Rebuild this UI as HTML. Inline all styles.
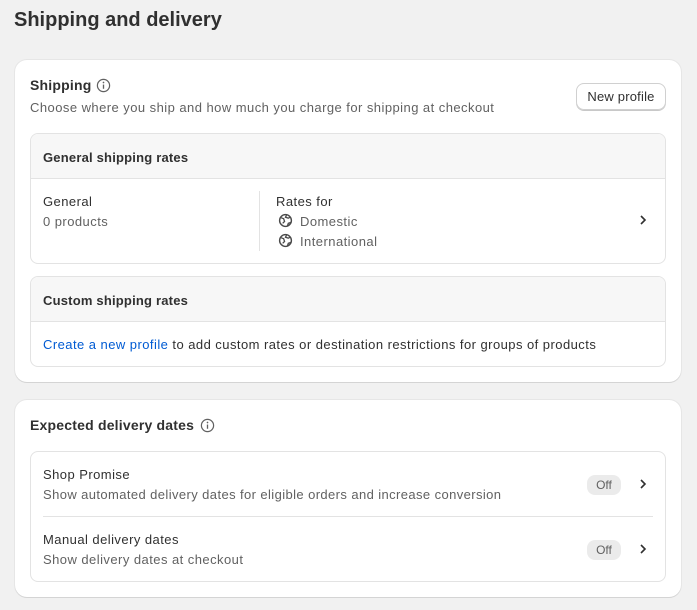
<!DOCTYPE html>
<html><head><meta charset="utf-8"><style>
*{box-sizing:border-box;margin:0;padding:0}
body{width:697px;height:610px;background:#f1f1f1;font-family:"Liberation Sans",sans-serif;color:#303030;position:relative;overflow:hidden;font-size:13px;letter-spacing:0.45px}
.a{position:absolute;white-space:nowrap}
.card{position:absolute;left:15px;width:666px;background:#fff;border-radius:12px;box-shadow:0 1px 0 #d4d4d4,0 0 0 1px #e6e6e6}
.box{position:absolute;left:30px;width:636px;border:1px solid #e3e3e3;border-radius:8px;background:#fff;overflow:hidden}
.hd{background:#f7f7f7;border-bottom:1px solid #e3e3e3;height:45px;font-weight:bold;padding:16px 12px 0;letter-spacing:0.2px}
.b{font-weight:bold;letter-spacing:0.2px}
.g{color:#616161}
.pill{position:absolute;background:#ebebeb;border-radius:8px;color:#616161;font-size:12px;width:34px;height:20px;text-align:center;line-height:20px;letter-spacing:0}
</style></head><body>
<div class="a b" style="left:14px;top:9px;font-size:20px;color:#303030;letter-spacing:0">Shipping and delivery</div>

<div class="card" style="top:60px;height:322px"></div>
<div class="a b" style="left:30px;top:77px;font-size:14px">Shipping</div>
<svg class="a" style="left:96px;top:78px" width="15" height="15" viewBox="0 0 16 16"><circle cx="8" cy="8" r="6.5" fill="none" stroke="#616161" stroke-width="1.3"/><path d="M8 7v4.5" stroke="#616161" stroke-width="1.4"/><circle cx="8" cy="4.8" r=".9" fill="#616161"/></svg>
<div class="a g" style="left:30px;top:100px">Choose where you ship and how much you charge for shipping at checkout</div>
<div class="a" style="left:576px;top:83px;width:90px;height:27px;border:1px solid #d0d0d0;border-radius:8px;box-shadow:0 1px 0 #c8c8c8;text-align:center;line-height:25px;font-size:13px;letter-spacing:0.2px">New profile</div>

<div class="box" style="top:133px;height:131px"><div class="hd">General shipping rates</div></div>
<div class="a" style="left:43px;top:194px">General</div>
<div class="a g" style="left:43px;top:214px">0 products</div>
<div class="a" style="left:259px;top:191px;width:1px;height:60px;background:#e3e3e3"></div>
<div class="a" style="left:276px;top:194px">Rates for</div>
<svg class="a" style="left:278px;top:213px" width="15" height="15" viewBox="0 0 16 16"><circle cx="8" cy="8" r="6.3" fill="none" stroke="#4a4a4a" stroke-width="1.5"/><path d="M3 5l3 1 1 3-2 2M9 2.5l-1 2 3 1 2-1M10 14l1-3 3-1" fill="none" stroke="#4a4a4a" stroke-width="1.4"/></svg>
<div class="a g" style="left:300px;top:214px">Domestic</div>
<svg class="a" style="left:278px;top:233px" width="15" height="15" viewBox="0 0 16 16"><circle cx="8" cy="8" r="6.3" fill="none" stroke="#4a4a4a" stroke-width="1.5"/><path d="M3 5l3 1 1 3-2 2M9 2.5l-1 2 3 1 2-1M10 14l1-3 3-1" fill="none" stroke="#4a4a4a" stroke-width="1.4"/></svg>
<div class="a g" style="left:300px;top:234px">International</div>
<svg class="a" style="left:638px;top:214px" width="10" height="12" viewBox="0 0 10 12"><path d="M3 2l4 4-4 4" fill="none" stroke="#303030" stroke-width="1.6"/></svg>

<div class="box" style="top:276px;height:91px"><div class="hd">Custom shipping rates</div></div>
<div class="a" style="left:43px;top:337px;letter-spacing:0.45px"><span style="color:#005bd3">Create a new profile</span> to add custom rates or destination restrictions for groups of products</div>

<div class="card" style="top:400px;height:197px"></div>
<div class="a b" style="left:30px;top:417px;font-size:14px">Expected delivery dates</div>
<svg class="a" style="left:200px;top:418px" width="15" height="15" viewBox="0 0 16 16"><circle cx="8" cy="8" r="6.5" fill="none" stroke="#616161" stroke-width="1.3"/><path d="M8 7v4.5" stroke="#616161" stroke-width="1.4"/><circle cx="8" cy="4.8" r=".9" fill="#616161"/></svg>
<div class="box" style="top:451px;height:131px"></div>
<div class="a" style="left:43px;top:467px">Shop Promise</div>
<div class="a g" style="left:43px;top:487px;letter-spacing:0.4px">Show automated delivery dates for eligible orders and increase conversion</div>
<div class="pill" style="left:587px;top:475px">Off</div>
<svg class="a" style="left:638px;top:478px" width="10" height="12" viewBox="0 0 10 12"><path d="M3 2l4 4-4 4" fill="none" stroke="#303030" stroke-width="1.6"/></svg>
<div class="a" style="left:43px;top:516px;width:610px;height:1px;background:#e3e3e3"></div>
<div class="a" style="left:43px;top:532px">Manual delivery dates</div>
<div class="a g" style="left:43px;top:552px">Show delivery dates at checkout</div>
<div class="pill" style="left:587px;top:540px">Off</div>
<svg class="a" style="left:638px;top:543px" width="10" height="12" viewBox="0 0 10 12"><path d="M3 2l4 4-4 4" fill="none" stroke="#303030" stroke-width="1.6"/></svg>
</body></html>
